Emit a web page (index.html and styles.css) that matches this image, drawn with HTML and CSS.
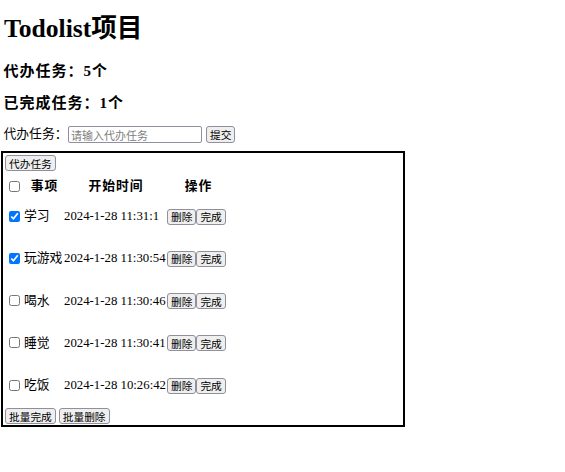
FILE: index.html
```html
<!DOCTYPE html>
<html lang="zh-CN">
<head>
<meta charset="utf-8">
<title>Todolist项目</title>
<link rel="stylesheet" href="styles.css">
</head>
<body>
<div class="page">
  <h1 class="title">Todolist项目</h1>
  <h3 class="count count-first">代办任务：5个</h3>
  <h3 class="count count-second">已完成任务：1个</h3>
  <div class="add">
    <span class="add-label">代办任务：</span>
    <input class="add-input" type="text" placeholder="请输入代办任务">
    <button class="btn add-btn">提交</button>
  </div>
  <div class="box">
    <div class="box-top"><button class="btn">代办任务</button></div>
    <table class="list">
      <colgroup>
        <col class="c-check"><col class="c-name"><col class="c-date"><col class="c-ops">
      </colgroup>
      <thead>
        <tr class="head-row">
          <th class="cell-check"><input class="chk" type="checkbox"></th>
          <th>事项</th>
          <th>开始时间</th>
          <th>操作</th>
        </tr>
      </thead>
      <tbody>
        <tr class="item">
          <td class="cell-check"><input class="chk" type="checkbox" checked></td>
          <td>学习</td>
          <td>2024-1-28 11:31:1</td>
          <td class="ops"><button class="btn">删除</button><button class="btn">完成</button></td>
        </tr>
        <tr class="item">
          <td class="cell-check"><input class="chk" type="checkbox" checked></td>
          <td>玩游戏</td>
          <td>2024-1-28 11:30:54</td>
          <td class="ops"><button class="btn">删除</button><button class="btn">完成</button></td>
        </tr>
        <tr class="item">
          <td class="cell-check"><input class="chk" type="checkbox"></td>
          <td>喝水</td>
          <td>2024-1-28 11:30:46</td>
          <td class="ops"><button class="btn">删除</button><button class="btn">完成</button></td>
        </tr>
        <tr class="item">
          <td class="cell-check"><input class="chk" type="checkbox"></td>
          <td>睡觉</td>
          <td>2024-1-28 11:30:41</td>
          <td class="ops"><button class="btn">删除</button><button class="btn">完成</button></td>
        </tr>
        <tr class="item">
          <td class="cell-check"><input class="chk" type="checkbox"></td>
          <td>吃饭</td>
          <td>2024-1-28 10:26:42</td>
          <td class="ops"><button class="btn">删除</button><button class="btn">完成</button></td>
        </tr>
      </tbody>
    </table>
    <div class="box-bottom">
      <button class="btn">批量完成</button>
      <button class="btn">批量删除</button>
    </div>
  </div>
</div>
</body>
</html>
```

FILE: styles.css
```css
html, body {
  margin: 0;
  padding: 0;
  background: #ffffff;
}

body {
  font-family: "Liberation Serif", "Noto Sans CJK SC", serif;
  font-size: 12.8px;
  color: #000000;
}

.page {
  padding-left: 1px;
}

.title {
  margin: 14px 0 0 3px;
  font-size: 25.6px;
  line-height: 30px;
  font-weight: bold;
}

.count {
  margin: 0 0 0 2.5px;
  font-size: 15px;
  line-height: 18px;
  font-weight: bold;
  letter-spacing: 1px;
}

.count-first {
  margin-top: 18px;
}

.count-second {
  margin-top: 14px;
}

.btn {
  box-sizing: border-box;
  height: 16px;
  margin: 0;
  padding: 0 3px;
  border: 1px solid #8f8f9d;
  border-radius: 3px;
  background: #efefef;
  color: #000;
  font-family: "Noto Sans CJK SC", sans-serif;
  font-size: 10.7px;
  line-height: 13px;
}

.add {
  display: flex;
  align-items: center;
  height: 17px;
  margin: 14px 0 0 2.5px;
  line-height: 17px;
}

.add-label {
  font-size: 12.8px;
}

.add-input {
  box-sizing: border-box;
  width: 134px;
  height: 17px;
  margin: 0 0 0 0.5px;
  padding: 0 2px;
  border: 1px solid #8f8f9d;
  border-radius: 2px;
  font-family: "Noto Sans CJK SC", sans-serif;
  font-size: 11px;
  color: #000;
  background: #fff;
}

.add-input::placeholder {
  color: #808080;
}

.add .add-btn {
  margin-left: 4px;
  height: 17px;
}

.box {
  box-sizing: border-box;
  width: 404px;
  margin-top: 8px;
  padding: 2px 0 1px 2px;
  border: 2px solid #000000;
}

.box-top {
  display: flex;
}

.list {
  margin-top: 6px;
  border-collapse: separate;
  border-spacing: 0;
  table-layout: fixed;
  width: 224px;
}

.c-check { width: 19px; }
.c-name { width: 40px; }
.c-date { width: 103px; }
.c-ops { width: 62px; }

.list th,
.list td {
  padding: 0;
  white-space: nowrap;
  vertical-align: middle;
}

.list th {
  font-weight: bold;
  text-align: center;
  line-height: 16px;
  letter-spacing: 1px;
  text-indent: 1px;
}

.list td {
  text-align: left;
  line-height: 16px;
}

.head-row {
  height: 18px;
}

.item {
  height: 42.25px;
}

.cell-check {
  text-align: left;
}

.list th.cell-check {
  text-align: left;
  text-indent: 0;
}

.chk {
  display: block;
  width: 11px;
  height: 11px;
  margin: 0 0 0 4px;
}

.ops {
  padding-left: 1px;
}

.ops .btn {
  vertical-align: middle;
}

.box-bottom {
  display: flex;
  gap: 3px;
  margin-top: 2px;
}
```
